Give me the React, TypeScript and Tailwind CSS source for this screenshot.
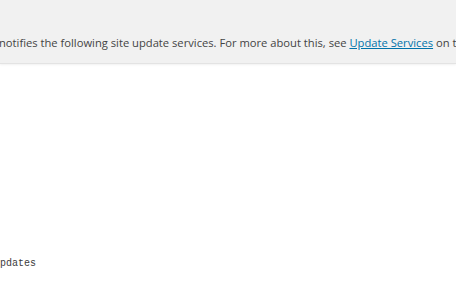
export default function App() {
  return (
    <div className="w-[456px] h-[300px] overflow-hidden bg-white" style={{ fontFamily: '"Open Sans", "Liberation Sans", sans-serif' }}>
      {/* Notice band */}
      <div className="h-[64px] bg-[#f1f1f1] border-b border-[#e3e3e3] shadow-[0_1px_2px_rgba(0,0,0,0.06)] flex items-end pb-[12px]">
        <p className="whitespace-nowrap text-[11.2px] leading-[16px] text-[#444] -ml-[1px]">
          notifies the following site update services. For more about this, see{' '}
          <a href="#" className="text-[#0073aa] underline">Update Services</a> on the Codex.
        </p>
      </div>

      {/* Ping list */}
      <div className="pt-[193px]">
        <pre
          className="text-[10px] leading-[14px] text-[#3c3c3c] -ml-[6px]"
          style={{ fontFamily: '"Liberation Mono", "DejaVu Sans Mono", monospace' }}
        >
          updates
        </pre>
      </div>
    </div>
  );
}
